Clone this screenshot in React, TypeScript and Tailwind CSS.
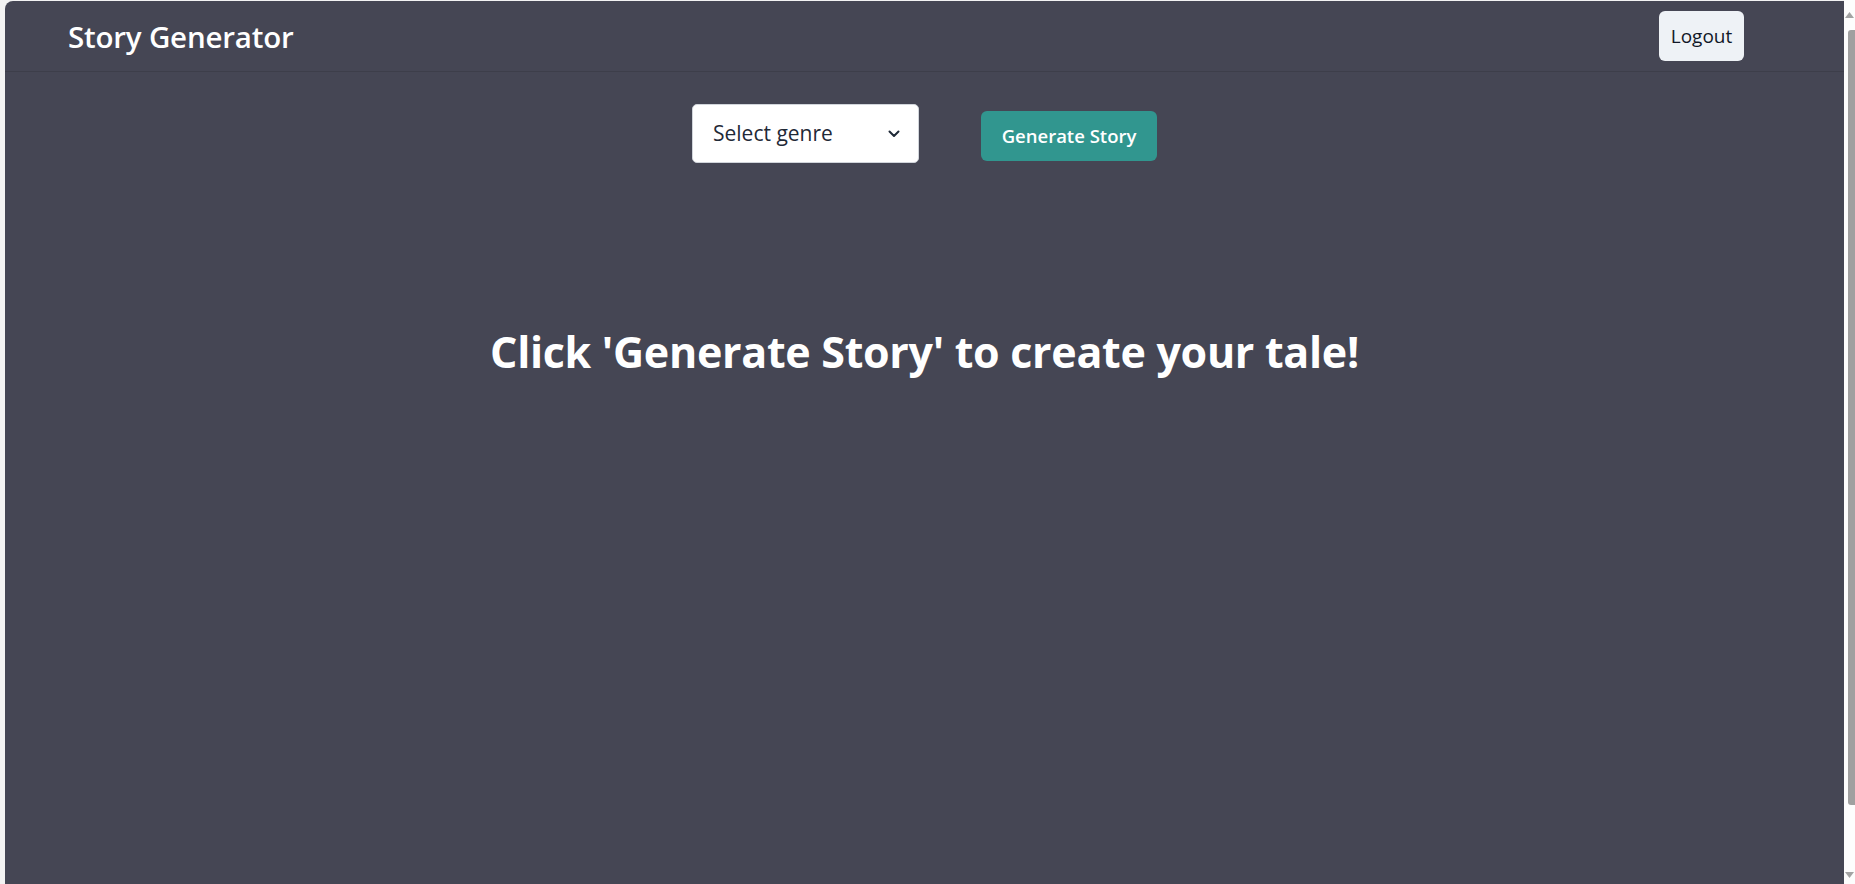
import { useState } from "react";

const genres = ["Fantasy", "Sci-Fi", "Mystery", "Adventure", "Romance"];

function Chevron() {
  return (
    <svg width="12" height="8" viewBox="0 0 12 8" fill="none">
      <path d="M1.5 1.5 6 6l4.5-4.5" stroke="#1f2937" strokeWidth="2" strokeLinecap="round" strokeLinejoin="round" />
    </svg>
  );
}

function Scrollbar() {
  return (
    <div className="flex w-[11px] flex-col items-end bg-[#fdfdfd] pt-[12px] pb-[6px]">
      <svg width="9" height="6" viewBox="0 0 9 6" className="mr-[1px]">
        <path d="M4.5 0 9 6H0z" fill="#a3a3a3" />
      </svg>
      <div className="mt-[12px] h-[775px] w-[7px] rounded-tl-[3px] rounded-bl-[3px] bg-[#a0a0a0]" />
      <div className="flex-1" />
      <svg width="9" height="6" viewBox="0 0 9 6" className="mr-[1px]">
        <path d="M0 0h9L4.5 6z" fill="#a3a3a3" />
      </svg>
    </div>
  );
}

export default function App() {
  const [genre] = useState("");

  return (
    <div
      className="flex h-[884px] w-full overflow-hidden bg-[#f3f3f3]"
      style={{ fontFamily: '"Open Sans", "Noto Sans", sans-serif' }}
    >
      <div className="w-[5px] shrink-0" />

      <main className="mt-[1px] flex flex-1 flex-col rounded-tl-[8px] bg-[#454654] text-white">
        <header className="flex h-[71px] items-center justify-between border-b border-[#3d3e4a] pr-[100px] pl-[63px]">
          <h1 className="mt-[2px] text-[29.5px] font-semibold tracking-[-0.2px]">Story Generator</h1>
          <button className="h-[50px] w-[85px] rounded-[6px] bg-[#eef2f6] text-[19px] font-medium text-[#111827]">
            Logout
          </button>
        </header>

        <div className="mt-[32px] flex justify-center gap-[62px]">
          <div className="flex h-[59px] w-[227px] items-center justify-between rounded-[5px] border border-[#d1d5db] bg-white pr-[18px] pl-[20px]">
            <span className="text-[21px] text-[#1f2937]">{genre || "Select genre"}</span>
            <Chevron />
          </div>
          <button
            className="mt-[7px] h-[50px] w-[176px] rounded-[6px] bg-[#31968f] text-[18.5px] font-semibold"
            title={genres.join(", ")}
          >
            Generate Story
          </button>
        </div>

        <div className="mt-[157px] flex justify-center">
          <h2 className="text-[43px] font-bold tracking-[-0.3px]">
            Click 'Generate Story' to create your tale!
          </h2>
        </div>
      </main>

      <Scrollbar />
    </div>
  );
}
